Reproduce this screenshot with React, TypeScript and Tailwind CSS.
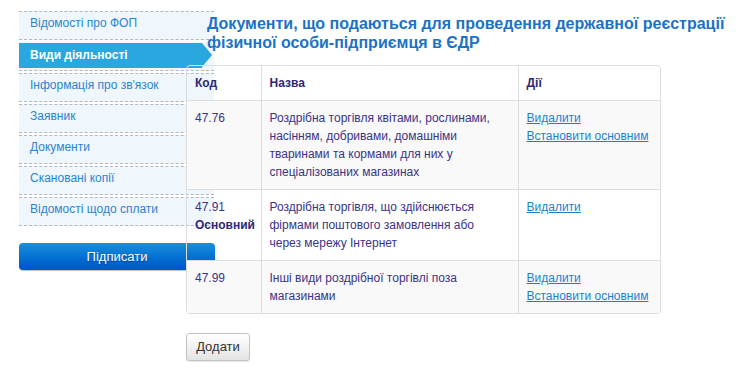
import React from 'react'

const menu = [
  'Відомості про ФОП',
  'Види діяльності',
  'Інформація про зв\'язок',
  'Заявник',
  'Документи',
  'Скановані копії',
  'Відомості щодо сплати',
]

const rows = [
  {
    code: '47.76',
    main: false,
    name: 'Роздрібна торгівля квітами, рослинами, насінням, добривами, домашніми тваринами та кормами для них у спеціалізованих магазинах',
    setMain: true,
    striped: true,
  },
  {
    code: '47.91',
    main: true,
    name: 'Роздрібна торгівля, що здійснюється фірмами поштового замовлення або через мережу Інтернет',
    setMain: false,
    striped: false,
  },
  {
    code: '47.99',
    main: false,
    name: 'Інші види роздрібної торгівлі поза магазинами',
    setMain: true,
    striped: true,
  },
]

const Sidebar = () => (
  <div className="w-[195px] shrink-0 relative z-0">
    <ul className="flex flex-col gap-[2px]">
      {menu.map((item, i) =>
        i === 1 ? (
          <li key={item} className="h-[29px] border-b border-dashed border-[#b4b8bc] bg-[#f0f7fc] pt-[1px]">
            <div className="relative h-[25px] w-[183px] bg-[#29a7df] pl-[11px] text-[12px] font-bold leading-[25px] text-white">
              {item}
              <span className="absolute right-[-10px] top-0 h-0 w-0 border-y-[12.5px] border-l-[10px] border-y-transparent border-l-[#29a7df]" />
            </div>
          </li>
        ) : (
          <li
            key={item}
            className="h-[29px] border-y border-dashed border-[#b4b8bc] bg-[#f0f7fc] pl-[11px] pt-[2px] text-[12px] leading-[18px] text-[#2a84d0]"
          >
            {item}
          </li>
        )
      )}
    </ul>
    <button className="mt-[17px] h-[27px] w-[196px] rounded-[4px] bg-gradient-to-b from-[#1b8fdc] to-[#0052c8] text-[13px] text-white shadow-[0_1px_1px_rgba(0,0,0,0.25)] [text-shadow:0_1px_1px_rgba(0,0,0,0.35)]">
      Підписати
    </button>
  </div>
)

export default function App() {
  return (
    <div className="flex min-h-[373px] bg-white pl-[19px] pt-[11px] font-['Liberation_Sans',Arial,sans-serif]">
      <Sidebar />
      <div className="relative z-10 ml-[-28px] w-[520px] shrink-0">
        <h1 className="mt-[3px] pl-[21px] text-[16px] font-bold leading-[19px] text-[#1b72c6] whitespace-nowrap">
          Документи, що подаються для проведення державної реєстрації
          <br />
          фізичної особи-підприємця в ЄДР
        </h1>
        <div className="mt-[13px] w-[475px] overflow-hidden rounded-[4px] border border-[#dddddd]">
          <table className="w-full table-fixed border-collapse text-[12px] leading-[18px]">
            <colgroup>
              <col className="w-[74px]" />
              <col className="w-[257px]" />
              <col />
            </colgroup>
            <thead>
              <tr className="text-left font-bold text-[#2c2877]">
                <th className="px-[8px] py-[8px] font-bold">Код</th>
                <th className="border-l border-[#dddddd] px-[8px] py-[8px] font-bold">Назва</th>
                <th className="border-l border-[#dddddd] px-[8px] py-[8px] font-bold">Дії</th>
              </tr>
            </thead>
            <tbody className="text-[#3b3388]">
              {rows.map((r) => (
                <tr key={r.code} className={r.striped ? 'bg-[#f9f9f9]' : ''}>
                  <td className="border-t border-[#dddddd] px-[8px] py-[8px] align-top">
                    {r.code}
                    {r.main && <div className="font-bold text-[#2c2877]">Основний</div>}
                  </td>
                  <td className="border-l border-t border-[#dddddd] py-[8px] pl-[8px] pr-[24px] align-top">{r.name}</td>
                  <td className="border-l border-t border-[#dddddd] px-[8px] py-[8px] align-top">
                    <a href="#" className="block text-[#1c7fd0] underline">Видалити</a>
                    {r.setMain && (
                      <a href="#" className="block text-[#1c7fd0] underline">Встановити основним</a>
                    )}
                  </td>
                </tr>
              ))}
            </tbody>
          </table>
        </div>
        <button className="mt-[19px] h-[28px] w-[64px] rounded-[3px] border border-[#c4c4c4] bg-gradient-to-b from-white to-[#e4e4e4] text-[13px] text-[#333333] shadow-[0_1px_1px_rgba(0,0,0,0.1)]">
          Додати
        </button>
      </div>
    </div>
  )
}
